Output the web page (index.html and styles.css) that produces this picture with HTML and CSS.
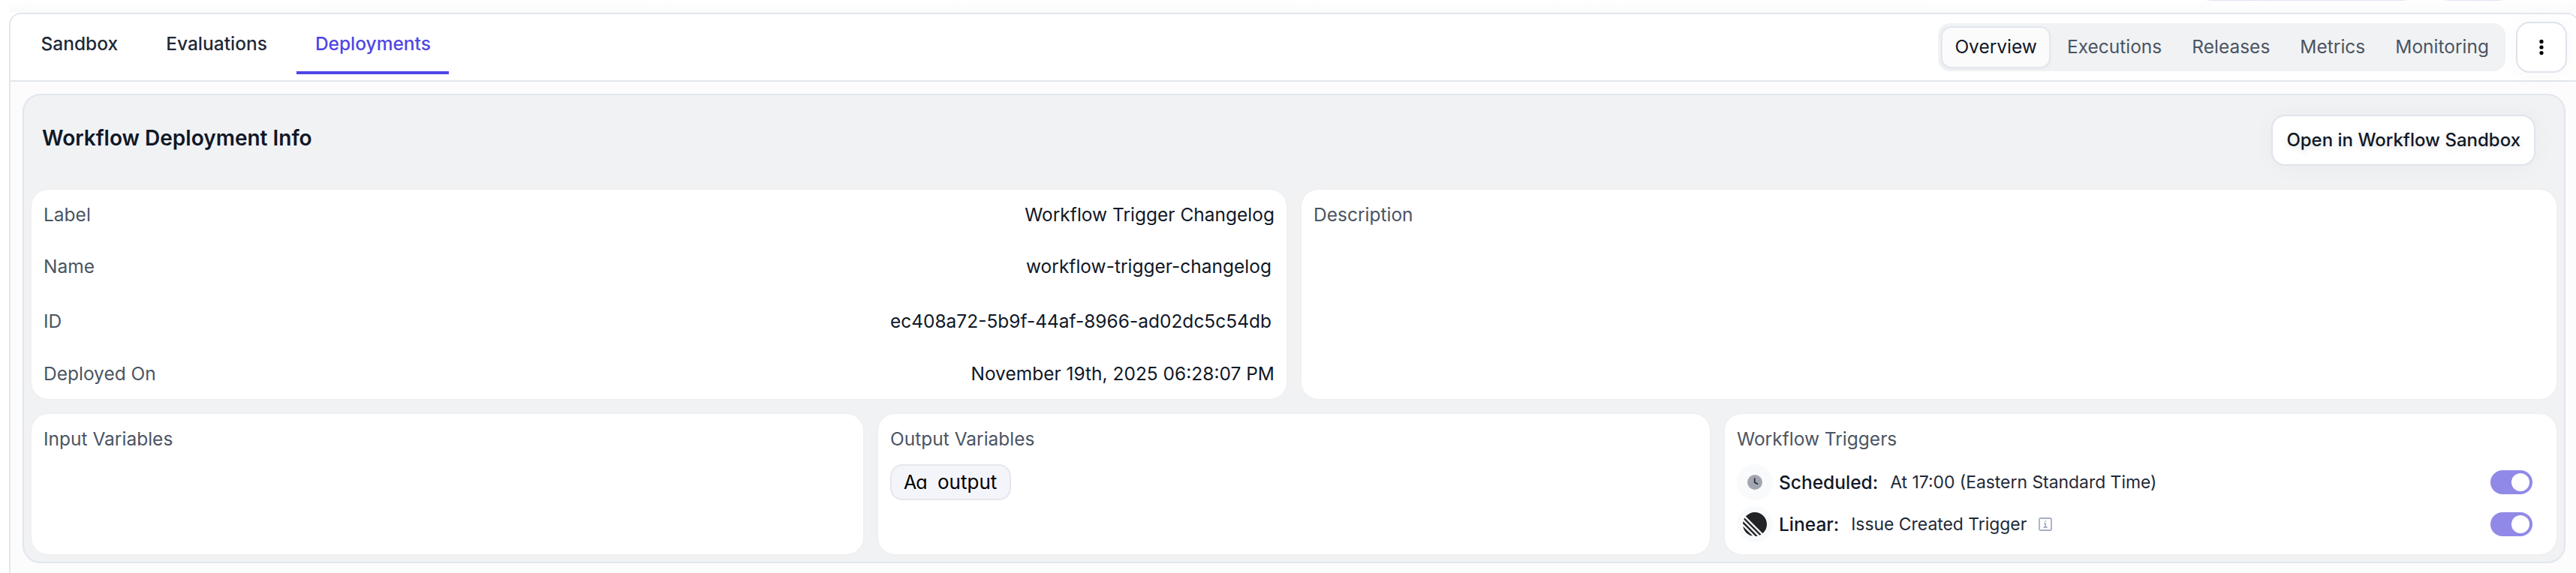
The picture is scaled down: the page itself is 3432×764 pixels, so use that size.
FILE: index.html
```html
<!DOCTYPE html>
<html lang="en">
<head>
  <meta charset="UTF-8">
  <title>Workflow Deployment</title>
  <link rel="stylesheet" href="styles.css">
</head>
<body>

<div class="topStrip">
  <span class="topBtn wide"></span>
  <span class="topBtn"></span>
</div>

<div class="page">
  <div class="header">
    <ul class="tabs">
      <li>Sandbox</li>
      <li>Evaluations</li>
      <li class="current">Deployments</li>
    </ul>
    <div class="actions">
      <ul class="views">
        <li class="current">Overview</li>
        <li>Executions</li>
        <li>Releases</li>
        <li>Metrics</li>
        <li>Monitoring</li>
      </ul>
      <button class="btn moreBtn">
        <svg width="8" height="24" viewBox="0 0 8 24">
          <circle cx="4" cy="4.4" r="2.6"/><circle cx="4" cy="12" r="2.6"/><circle cx="4" cy="19.6" r="2.6"/>
        </svg>
      </button>
    </div>
  </div>

  <div class="content">
    <div class="panel">
      <div class="panelHead">
        <h2>Workflow Deployment Info</h2>
        <button class="btn">Open in Workflow Sandbox</button>
      </div>

      <div class="cards two">
        <dl class="card info">
          <dt>Label</dt><dd>Workflow Trigger Changelog</dd>
          <dt>Name</dt><dd class="copy">workflow-trigger-changelog</dd>
          <dt>ID</dt><dd class="copy">ec408a72-5b9f-44af-8966-ad02dc5c54db</dd>
          <dt>Deployed On</dt><dd>November 19th, 2025 06:28:07 PM</dd>
        </dl>
        <div class="card">
          <h3>Description</h3>
        </div>
      </div>

      <div class="cards three">
        <div class="card">
          <h3>Input Variables</h3>
        </div>
        <div class="card">
          <h3>Output Variables</h3>
          <div class="chip"><span class="type">Aa</span>output</div>
        </div>
        <div class="card">
          <h3>Workflow Triggers</h3>
          <ul class="triggers">
            <li>
              <span class="icon">
                <svg width="20" height="20" viewBox="0 0 20 20">
                  <circle cx="10" cy="10" r="10" fill="#a3a5b1"/>
                  <path d="M9.7 4.6v5.6l4.4 2.4" fill="none" stroke="#1f2937" stroke-width="1.7"/>
                </svg>
              </span>
              <b>Scheduled:</b>
              <span class="text">At 17:00 (Eastern Standard Time)</span>
              <span class="toggle"></span>
            </li>
            <li>
              <span class="icon">
                <svg width="32" height="32" viewBox="0 0 100 100" fill="#222326">
                  <path d="M1.22541 61.5228c-.2225-.9485.90748-1.5459 1.59638-.857L39.3342 97.1782c.6889.6889.0915 1.8189-.857 1.5964C20.0515 94.4522 5.54779 79.9485 1.22541 61.5228ZM.00189135 46.8891c-.01764375.2833.08887215.5599.28957165.7606L52.3503 99.7085c.2007.2007.4773.3075.7606.2896 2.3692-.1476 4.6938-.46 6.9624-.9259.7645-.157 1.0301-1.0963.4782-1.6481L2.57595 39.4485c-.55186-.5519-1.49117-.2863-1.648174.4782-.465915 2.2686-.77832 4.5932-.92588465 6.9624ZM4.21093 29.7054c-.16649.3738-.08169.8106.20765 1.1l64.77602 64.776c.2894.2894.7262.3742 1.1.2077 1.7861-.7956 3.5171-1.6927 5.1855-2.684.5521-.328.6373-1.0867.1832-1.5407L8.43566 24.3367c-.45409-.4541-1.21271-.3689-1.54074.1832-.99132 1.6684-1.88843 3.3994-2.68399 5.1855ZM12.6587 18.074c-.3701-.3701-.393-.9637-.0443-1.3541C21.7795 6.45931 35.1114 0 49.9519 0 77.5927 0 100 22.4073 100 50.0481c0 14.8405-6.4593 28.1724-16.7199 37.3375-.3903.3487-.984.3258-1.3542-.0443L12.6587 18.074Z"/>
                </svg>
              </span>
              <b>Linear:</b>
              <span class="text">Issue Created Trigger</span>
              <svg class="hint" width="18" height="18" viewBox="0 0 18 18" fill="none" stroke="#a6b0c3" stroke-width="1.8">
                <rect x="1" y="1" width="16" height="16" rx="1.6"/>
                <path d="M7.2 8.2h2v4.6M6.6 13h5M8.2 5.2h1.6"/>
              </svg>
              <span class="toggle"></span>
            </li>
          </ul>
        </div>
      </div>
    </div>
  </div>
</div>

</body>
</html>
```

FILE: styles.css
```css
* { margin: 0; padding: 0; box-sizing: border-box; }
html { overflow: hidden; }
body { width: 3436px; height: 764px; overflow: hidden; background: #fff;
  font: 24.5px/32px Inter, sans-serif; color: #111827; }
ul { list-style: none; }
svg { display: block; flex: none; }

/* bottom edge of the bar above the page */
.topStrip { height: 17px; margin-left: 12px; padding-right: 99px;
  display: flex; justify-content: flex-end; gap: 46px;
  background: linear-gradient(#fff, #fafafa); }
.topBtn { width: 82px; height: 1px;
  background: linear-gradient(90deg, transparent, #dfe3ee 10px, #dfe3ee 72px, transparent); }
.topBtn.wide { width: 272px;
  background: linear-gradient(90deg, transparent, #dfe3ee 10px, #dfe3ee 262px, transparent); }

.page { height: 780px; margin-left: 12px; border: 2px solid #e2e6ec;
  border-radius: 16px; background: #fcfcfc; overflow: hidden; }
.header { height: 90px; display: flex; justify-content: space-between;
  align-items: center; padding: 0 14px 0 16px;
  border-bottom: 2px solid #e2e6ec; background: #fff; }

.tabs { display: flex; gap: 15px; height: 88px; padding-bottom: 8px; }
.tabs li { padding: 23px 24.5px 0; font-weight: 500; color: #1f2937;
  border-bottom: 4px solid transparent; }
.tabs li.current { color: #4f46e5; border-color: #4f46e5; }

.actions { display: flex; align-items: center; gap: 14px; }
.views { display: flex; gap: 4px; padding: 4px; height: 64px;
  border-radius: 16px; background: #f1f2f4; color: #4b5563; }
.views li { padding: 9px 16px; border: 2px solid transparent; border-radius: 14px; }
.views li.current { color: #111827; background: #fbfbfc; border-color: #e2e7f0;
  box-shadow: 0 1px 3px rgba(0, 0, 0, .05); }

.btn { height: 68px; padding: 0 18px; border: 2px solid #dfe3eb;
  border-radius: 18px; background: #fff; color: #111827;
  font: 500 24px/32px Inter, sans-serif;
  text-shadow: 0 3px 8px rgba(0, 0, 0, .14);
  box-shadow: 0 2px 32px rgba(20, 20, 40, .035); }
.moreBtn { width: 68px; display: flex; align-items: center; justify-content: center; }

.content { padding: 16px; }
.panel { height: 626px; padding: 0 8px 8px; border: 2px solid #e2e6ec;
  border-radius: 24px; background: #f1f2f4; }
.panelHead { height: 124px; padding: 0 30px 4px 16px; display: flex;
  align-items: center; justify-content: space-between; }
.panelHead h2 { padding-bottom: 6px; font-size: 28px; font-weight: 600; }

.cards { display: grid; gap: 16px; }
.two { grid-template-columns: 1fr 1fr; height: 283px; margin-bottom: 16px; }
.three { grid-template-columns: 1fr 1fr 1fr; height: 191px; }
.card { padding: 17px 16px 0; border: 2px solid #f0f0f1; border-radius: 24px;
  background: #fff; background-clip: padding-box; }
.card h3 { font-size: 24.5px; font-weight: 400; color: #4b5563; }

.info { display: grid; grid-template-columns: auto auto;
  grid-template-rows: 65px 73px 73px 67px; align-content: start;
  align-items: center; padding-top: 0; }
.info dt { color: #4b5563; }
.info dd { text-align: right; }
.info .copy { padding: 1px 4px 0 0; }

.chip { display: flex; align-items: center; width: 161px; height: 48px;
  margin-top: 18px; padding-left: 16px; border: 2px solid #e5e7eb;
  border-radius: 16px; background: #f4f5fa; color: #000; font-size: 26px; }
.chip .type { width: 45px; font-size: 25px; letter-spacing: -1px;
  font-feature-settings: "cv11"; }

.triggers { margin-top: 18px; display: grid; gap: 8px; }
.triggers li { display: flex; align-items: center; height: 48px; padding-right: 16px; }
.triggers b { font-weight: 500; margin: 0 16px 0 8px; }
.icon { width: 48px; height: 48px; border-radius: 50%; background: #f9fafc;
  display: flex; align-items: center; justify-content: center; }
.text { font-size: 22.9px; color: #1f2937; }
.hint { margin-left: 16px; }
.toggle { width: 56px; height: 32px; margin-left: auto; padding: 4px;
  border-radius: 16px; background: #9189e8; }
.toggle::after { content: ""; display: block; width: 24px; height: 24px;
  margin-left: auto; border-radius: 50%; background: #fff; }
```
